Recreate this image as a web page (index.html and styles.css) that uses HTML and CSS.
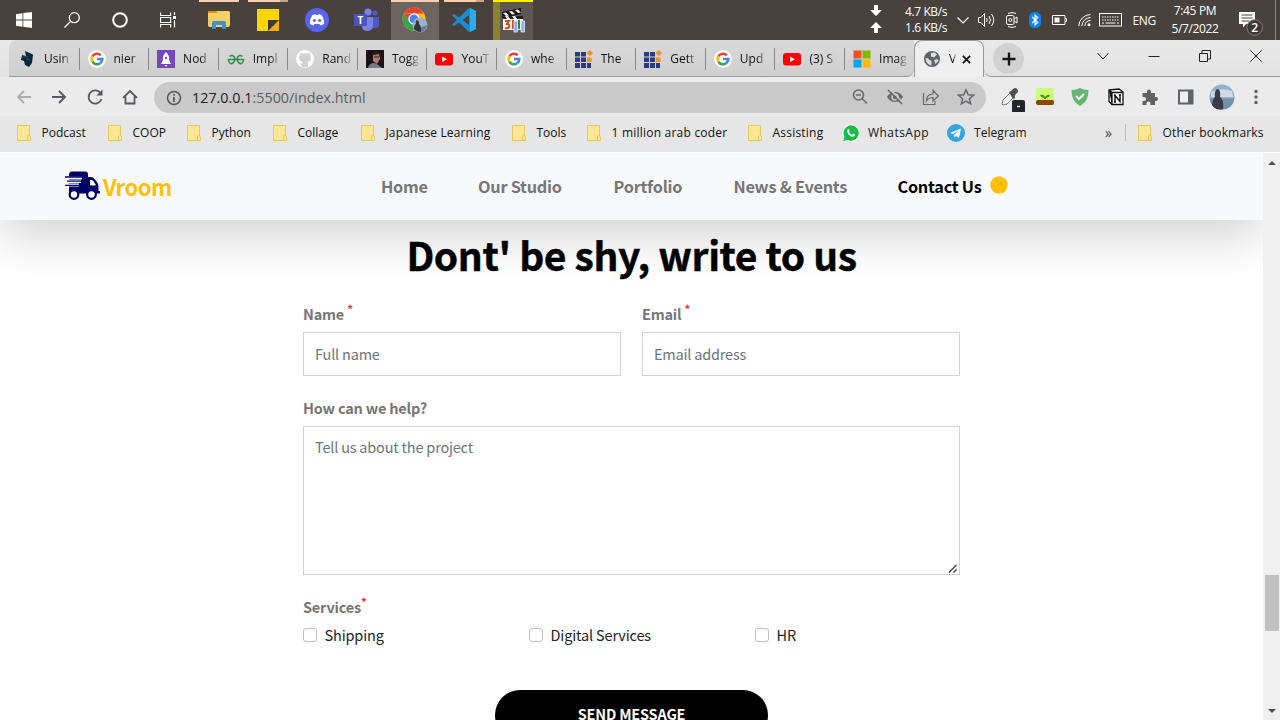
FILE: index.html
```html
<!DOCTYPE html>
<html lang="en">
<head>
<meta charset="utf-8">
<title>Vroom</title>
<link rel="stylesheet" href="styles.css">
</head>
<body>
<svg class="defs" width="0" height="0">
  <symbol id="google" viewBox="0 0 18 18"><circle cx="9" cy="9" r="9" fill="#fff"/><g fill="none" stroke-width="2.6"><path d="M4.5 6.2A5.3 5.3 0 0 1 12.7 5.3" stroke="#ea4335"/><path d="M4.5 11.8A5.3 5.3 0 0 1 4.5 6.2" stroke="#fbbc05"/><path d="M12.4 13A5.3 5.3 0 0 1 4.5 11.8" stroke="#34a853"/><path d="M9 9H14.3A5.3 5.3 0 0 1 12.4 13" stroke="#4285f4"/></g></symbol>
  <symbol id="youtube" viewBox="0 0 18 18"><rect x="0" y="3" width="18" height="12.5" rx="3" fill="#f00"/><path d="M7.2 6.5v5.4l4.6-2.7z" fill="#fff"/></symbol>
  <symbol id="blocks" viewBox="0 0 18 18"><g fill="#2e3a80"><path d="M0 2h5v4.500H0zM6 2h5v4.500H6zM0 7.500h5V12H0zM6 7.500h5V12H6zM0 13h5v5H0zM6 13h5v5H6zM12 13h4v5h-4z"/></g><path d="M12 7.500h4.500V12H12z" fill="#f39325"/><path d="M14.700 0l3.300 3-3 3.300-3.300-3z" fill="#f39325"/></symbol>
  <symbol id="folder" viewBox="0 0 14 16"><path d="M.5.5h12v11l1 1v3H.5z" fill="#ffe694" stroke="#e8c75c"/><path d="M10.500 15.500v-3.500q0-1.500 1.300-1.500t1.700 1.500v3.500z" fill="#ffe694" stroke="#e8c75c"/></symbol>
</svg>

<header class="taskbar">
  <div class="start">
    <span class="slot"><svg width="16" height="16" viewBox="0 0 16 16"><path fill="#fff" d="M0 2.200l6.500-1v6.300H0zM7.300 1.100L16 0v7.500H7.300zM0 8.400h6.500v6.400L0 13.800zM7.300 8.400H16V16l-8.700-1.200z"/></svg></span>
    <span class="slot"><svg width="16" height="16" viewBox="0 0 16 16" fill="none" stroke="#fff" stroke-width="1.300"><circle cx="10.300" cy="5.700" r="5"/><path d="M6.700 9.300L.5 15.500"/></svg></span>
    <span class="slot"><svg width="16" height="16" viewBox="0 0 16 16"><circle cx="8" cy="8" r="6.800" fill="none" stroke="#fff" stroke-width="2"/></svg></span>
    <span class="slot"><svg width="16" height="16" viewBox="0 0 16 16" fill="none" stroke="#fff" stroke-width="1.200"><path d="M.6.5v3h10v-3M.6 15.500v-3h10v3M.6 5.500h10v5H.6zM14.500 0v3M14.500 8v7.500"/><path d="M14.500 4v3" stroke-width="3"/></svg></span>
  </div>
  <div class="apps">
    <span class="app open"><svg width="22" height="20" viewBox="0 0 22 20"><path d="M0 3q0-2 2-2h19q1 0 1 2v12q0 2-2 2H2q-2 0-2-2z" fill="#f8cf62"/><path d="M0 1h8l2 2H0z" fill="#d99500"/><path d="M4 19v-6q0-2 2-2h10q2 0 2 2v6h-4v-4H8v4z" fill="#3b91cf"/></svg></span>
    <span class="app open stacked"><svg width="22" height="22" viewBox="0 0 22 22"><path d="M0 0h22v22H0z" fill="#ffd500"/><path d="M11 22V11h11v11z" fill="#f4ae00"/><path d="M11 22V11h11z" fill="#3c3b3a"/></svg></span>
    <span class="app"><svg width="24" height="24" viewBox="0 0 24 24"><circle cx="12" cy="12" r="12" fill="#5865f2"/><path d="M7.500 7l3-1 .5 1h2l.5-1 3 1q3 4 2.500 9l-3.500 1.500-1-1.500h-5l-1 1.500L5 16q-.5-5 2.500-9z" fill="#fff"/><circle cx="9.300" cy="12.500" r="1.500" fill="#5865f2"/><circle cx="14.700" cy="12.500" r="1.500" fill="#5865f2"/></svg></span>
    <span class="app"><svg width="25" height="24" viewBox="0 0 25 24"><circle cx="14" cy="4" r="3.600" fill="#7b83eb"/><circle cx="21" cy="5" r="2.600" fill="#5059c9"/><path d="M17 9h8v7q0 4-4 4h-4z" fill="#5059c9"/><path d="M8 9h11v8q0 6-6 6-5 0-5-6z" fill="#7b83eb"/><rect y="6" width="13" height="12" rx="1" fill="#4b53bc"/><text x="3.500" y="15.800" class="teams-letter">T</text></svg></span>
    <span class="app open current"><svg width="26" height="26" viewBox="0 0 26 26"><circle cx="12" cy="12" r="11.500" fill="#fbc116"/><path d="M2 6.200A11.500 11.500 0 0 1 22 6.500H12z" fill="#e94235"/><path d="M2 6.200A11.500 11.500 0 0 0 11 23.500l4-7-8-2z" fill="#31a752"/><path d="M2 6.200L7 15l5-8z" fill="#e94235"/><circle cx="12" cy="12" r="5.700" fill="#fff"/><circle cx="12" cy="12" r="4.400" fill="#4285f4"/><circle cx="18" cy="18" r="7.500" fill="#9bb1c8"/><path d="M12 19q5 3 13-1-1 7-7 7.500-5-1-6-6.500z" fill="#667f95"/><path d="M12 22q0-4 2-5-1-3.500 1-4 2.500 1 2 4 2.500 2 2 7.500-4 1-7-2.500z" fill="#35353e"/></svg></span>
    <span class="app open stacked"><svg width="24" height="24" viewBox="0 0 24 24"><path d="M17 0l7 3v18l-7 3L7 14.500 2 18l-2-1.500L5 12 0 7.500 2 6l5 3.500z" fill="#1d8bd1"/><path d="M17 7v10l-6.500-5z" fill="#49413c"/><path d="M18 0l6 3v18l-6 3z" fill="#2eaaf0"/></svg></span>
    <span class="app playing"><svg width="24" height="25" viewBox="0 0 24 25"><path d="M1 4L20 0v6L1 10z" fill="#151515"/><path d="M2 5l3 3 3-.6-3-3zM8 3.500l3 3 3-.6-3-3zM14 2l3 3 3-.6-3-3z" fill="#eee"/><rect x="2" y="9" width="20" height="13" fill="#f5f5f5"/><path d="M2 8h20v3H2z" fill="#222"/><path d="M4 8l2 3h3L7 8zM11 8l2 3h3l-2-3z" fill="#fff"/><path d="M4 13h4l-2 3q3 0 2 3-1 2-4 1" fill="none" stroke="#d34a19" stroke-width="2"/><path d="M12 12v9" stroke="#d34a19" stroke-width="2"/><path d="M18 12v9" stroke="#2a8a3a" stroke-width="2"/><path d="M13 13h3.500v11H13zM20 13h3.500v11H20z" fill="#8fb0ee" stroke="#dfe8ff" stroke-width=".8"/></svg></span>
  </div>
  <div class="tray">
    <span class="arrows"><svg width="12" height="30" viewBox="0 0 12 30" fill="#fff"><path d="M4 0h4v5h4l-6 6-6-6h4zM4 28h4v-5h4l-6-6-6 6h4z"/></svg></span>
    <span class="net"><span>4.7 KB/s</span><span>1.6 KB/s</span></span>
    <svg class="chev" width="12" height="12" viewBox="0 0 12 12" fill="none" stroke="#fff" stroke-width="1.200"><path d="M.5 3.500L6 9l5.500-5.500"/></svg>
    <svg class="sound" width="17" height="14" viewBox="0 0 17 14" fill="none" stroke="#fff"><path d="M.5 4.500H3l3.500-4v13L3 9.500H.5zM8.500 5q1.500 2 0 4M11 3q3 4 0 8M13.500 1q4.500 6 0 12"/></svg>
    <svg class="cam" width="12" height="16" viewBox="0 0 12 16" fill="none" stroke="#fff"><rect x=".5" y="3.500" width="7.500" height="9" rx="1.500"/><path d="M8 7l3-2v6L8 9M2 1.500q4-2 8 0M2 14.500q4 2 8 0"/><circle cx="4.300" cy="8" r="1.500"/></svg>
    <svg class="bt" width="12" height="16" viewBox="0 0 12 16"><rect width="12" height="16" rx="5.500" fill="#0a84f5"/><path d="M3.200 5l5.500 5.500L6 13V3l2.700 2.500L3.200 11" fill="none" stroke="#fff" stroke-width="1.200"/></svg>
    <svg class="bat" width="15" height="10" viewBox="0 0 15 10"><path d="M.5.5h12.500v9H.5zM13 3.500h1.500v3H13" fill="none" stroke="#fff"/><path d="M2.500 2.500h5v5h-5z" fill="#fff"/></svg>
    <svg class="wifi" width="13" height="14" viewBox="0 0 13 14" fill="none" stroke="#fff"><path d="M.8 13A12 12 0 0 1 12.500 1.500M3.800 13A9 9 0 0 1 12.500 4.500M6.800 13A6 6 0 0 1 12.500 7.500"/><circle cx="11" cy="11.700" r="1.500" fill="#fff" stroke="none"/></svg>
    <svg class="kbd" width="23" height="14" viewBox="0 0 23 14" fill="none" stroke="#fff"><rect x=".5" y=".5" width="22" height="12.500"/><path d="M3 4h17M3 7h17" stroke-dasharray="1.500 1"/><path d="M3 10h2M6.500 10h10M18 10h2"/></svg>
    <span class="lang">ENG</span>
    <span class="clock"><span>7:45 PM</span><span>5/7/2022</span></span>
    <span class="notice"><svg width="24" height="24" viewBox="0 0 24 24"><path d="M0 0h16v12H7l-3 3.500V12H0z" fill="#fff"/><path d="M2.500 3h11M2.500 6h11M2.500 9h8" stroke="#49413c"/><circle cx="15.700" cy="15.500" r="7.800" fill="#3c3a38" stroke="#817d79"/><text x="12.300" y="19.500" class="badge">2</text></svg></span>
    <span class="peek"></span>
  </div>
</header>

<section class="browser">
  <div class="tabs">
    <div class="strip">
      <div class="tab first"><svg viewBox="0 0 18 18"><path d="M7 1l7 3 1 1-1 8-3 4-4-2-1-4-3-1 1-5 4 1z" fill="#08283d"/><path d="M4 8l5-2v3l3 1" stroke="#36627e" fill="none" stroke-width=".7"/></svg><span class="label">Usin</span></div>
      <div class="tab"><svg><use href="#google"/></svg><span class="label">nier</span></div>
      <div class="tab"><svg viewBox="0 0 18 18"><path d="M0 0h18v18H0z" fill="#7648bb"/><path d="M9 2q4 4 3 8l2 4H4l2-4q-1-4 3-8zM7.500 15h3l-1.500 2z" fill="#fff"/><circle cx="9" cy="8" r="1.200" fill="#7648bb"/></svg><span class="label">Nod</span></div>
      <div class="tab"><svg viewBox="0 0 18 18" fill="none" stroke="#2f8d46" stroke-width="1.600"><path d="M2.500 6.500Q5 4.500 7 6.500q1.500 2 .5 4.500-1.500 3-4 2.500Q1.500 12.500 1.500 9.500h15q0 3-2 4-2.500.5-4-2.500-1-2.500.5-4.500 2-2 4.500 0"/></svg><span class="label">Impl</span></div>
      <div class="tab"><svg viewBox="0 0 18 18"><circle cx="9" cy="9" r="9" fill="#fff"/><path d="M6.500 17v-3q-2 .5-3-1.500M11.500 17v-3.500q0-1-.7-1.500 4-.5 3.700-4.500 0-1-.8-2 .3-1.200-.2-2.500-1 0-2.500 1-2-.5-4 0-1.500-1-2.500-1-.5 1.300-.2 2.500-.8 1-.8 2Q3.200 11.500 7.200 12q-.7.500-.7 1.500V17z" fill="#d2d2d2" stroke="#d2d2d2" stroke-width=".8"/></svg><span class="label">Rand</span></div>
      <div class="tab"><svg viewBox="0 0 18 18"><path d="M0 0h18v18H0z" fill="#1c1014"/><path d="M2 18q1-5 6-5l3 1 5 4z" fill="#747d83"/><path d="M7 4q3-2 6 0l1 5-3 5-4-3z" fill="#b3776c"/><path d="M6 5q0-4 5-4t4 6l-2-3-5 1z" fill="#26191b"/><path d="M8 7h5" stroke="#3b2326"/></svg><span class="label">Togg</span></div>
      <div class="tab"><svg><use href="#youtube"/></svg><span class="label">YouT</span></div>
      <div class="tab"><svg><use href="#google"/></svg><span class="label">whe</span></div>
      <div class="tab"><svg><use href="#blocks"/></svg><span class="label">The</span></div>
      <div class="tab"><svg><use href="#blocks"/></svg><span class="label">Gett</span></div>
      <div class="tab"><svg><use href="#google"/></svg><span class="label">Upd</span></div>
      <div class="tab"><svg><use href="#youtube"/></svg><span class="label">(3) S</span></div>
      <div class="tab last"><svg viewBox="0 0 18 18"><path d="M.5.500h8v8h-8z" fill="#f25022"/><path d="M9.500.5h8v8h-8z" fill="#7fba00"/><path d="M.5 9.500h8v8h-8z" fill="#00a4ef"/><path d="M9.500 9.500h8v8h-8z" fill="#ffb900"/></svg><span class="label">Imag</span></div>
    </div>
    <div class="tab active"><svg viewBox="0 0 18 18"><circle cx="9" cy="9" r="8" fill="#5f6368"/><path d="M2.500 8q3-.5 4 2l2 1v4.500Q3 15 2.500 8zM8 3q4-1.500 6 1.500l-3 3-3-1zM11 10l3.500-1 1 2-3 3z" fill="#dcdcdc"/></svg><span class="label">V</span><svg class="close" viewBox="0 0 10 10" stroke="#111" stroke-width="2"><path d="M1 1l8 8M9 1L1 9"/></svg></div>
    <div class="after">
      <span class="plus"><svg width="14" height="14" viewBox="0 0 14 14" stroke="#151515" stroke-width="2.400"><path d="M7 .5v13M.5 7h13"/></svg></span>
      <span class="window"><svg width="12" height="12" viewBox="0 0 12 12"><path d="M.5 3L6 9l5.500-6"/></svg><svg width="12" height="12" viewBox="0 0 12 12"><path d="M.5 6.500h11"/></svg><svg width="12" height="12" viewBox="0 0 12 12"><path d="M.5 3.500h8v8h-8zM3 3.500V.5h8.500V9h-3"/></svg><svg width="12" height="12" viewBox="0 0 12 12"><path d="M.5.500l11 11M11.500.5l-11 11"/></svg></span>
    </div>
  </div>

  <div class="toolbar">
    <div class="nav-icons">
      <svg class="dim" viewBox="0 0 18 18"><path d="M16 9H3M9 3L3 9l6 6"/></svg>
      <svg viewBox="0 0 18 18"><path d="M2 9h13M9 3l6 6-6 6"/></svg>
      <svg viewBox="0 0 18 18"><path d="M14.500 5A6.600 6.600 0 1 0 15.500 11"/><path d="M16.500 1.500v6h-6z" fill="#55585c" stroke="none"/></svg>
      <svg viewBox="0 0 18 18"><path d="M2 9.800L9 3l7 6.800M4.500 8.500v7h9v-7"/></svg>
    </div>
    <div class="omnibox">
      <svg class="info" viewBox="0 0 16 16"><circle cx="8" cy="8" r="6.500" fill="none" stroke="#55585c" stroke-width="1.500"/><path d="M8 7v5M8 4v1.700" stroke="#55585c" stroke-width="1.700"/></svg>
      <span class="url"><b>127.0.0.1</b>:5500/index.html</span>
      <span class="actions">
        <svg viewBox="0 0 18 18"><circle cx="7.500" cy="7" r="5"/><path d="M11 10.500l5 5M5 7h5"/></svg>
        <svg viewBox="0 0 18 18"><path d="M1 9q3-5 8-5t8 5q-3 5-8 5T1 9z" fill="#66686b" stroke="none"/><circle cx="9" cy="9" r="3" stroke="#c9c9c9"/><path d="M3.500 1l14 14" stroke="#c9c9c9"/><path d="M2 2l14 14"/></svg>
        <svg viewBox="0 0 18 18"><path d="M1.500 5v11.500H13V13M4.500 13q0-7 6.500-7V2.500L16.500 8 11 13V9.500q-4 0-6.500 3.500z" stroke-width="1.200"/></svg>
        <svg viewBox="0 0 18 18"><path d="M9 1.800l2.200 5 5.300.4-4.100 3.500 1.300 5.300L9 13.200 4.300 16l1.300-5.300-4.100-3.500 5.300-.4z" stroke-width="1.500"/></svg>
      </span>
    </div>
    <div class="extensions">
      <svg width="26" height="26" viewBox="0 0 26 26"><path d="M2 18l1-4 7-7 4 4-7 7-4 1z" fill="#f0f0f0" stroke="#777"/><path d="M9 6l2-1 2-2q2-2 4 0t0 4l-2 2v3l-2 1z" fill="#505050"/><rect x="12" y="14" width="13" height="13" rx="2" fill="#1f2529"/><path d="M17 20.500h3" stroke="#e8dede" stroke-width="1.500"/></svg>
      <svg class="e2" width="20" height="20" viewBox="0 0 20 20"><rect x="1" y="1" width="18" height="13" rx="2" fill="#ccff76"/><rect x="1" y="13" width="18" height="5" rx="2" fill="#8d4700"/><path d="M5 8q4-1 5 2 2-3 5-2-1 3-5 3T5 8zM9 10h2v2H9z" fill="#439500"/></svg>
      <svg class="e3" width="18" height="18" viewBox="0 0 18 18"><path d="M9 0q3 2 8.500 2Q18 13 9 18 0 13 .5 2 6 2 9 0z" fill="#66b574"/><path d="M5 8l3 3 5-5" stroke="#fff" stroke-width="2" fill="none"/></svg>
      <svg class="e4" width="18" height="18" viewBox="0 0 18 18"><path d="M2 2l10-1 4 3v12.500H5l-3-3z" fill="#fff" stroke="#111" stroke-width="1.300"/><path d="M2 2l3 2.500v12M5 4.500h11" stroke="#111" stroke-width="1.300"/><path d="M8 14V7.500l5 6V7M7 7.500h2M12 7h2M7 14h2" stroke="#111" stroke-width="1.400" fill="none"/></svg>
      <svg class="e5" width="18" height="18" viewBox="0 0 18 18"><path d="M1.500 5H6V3.500a2 2 0 0 1 4 0V5h4v4h1a2 2 0 0 1 0 4h-1v4H9.500v-1.500a2 2 0 0 0-4 0V17h-4v-4H3a2 2 0 0 0 0-4H1.500z" fill="#5f6368"/></svg>
      <svg class="e6" width="16" height="16" viewBox="0 0 16 16"><path d="M1 1.500h13.500v13H1z" fill="#eee" stroke="#5f6368" stroke-width="2"/><path d="M10 1h5v14h-5z" fill="#5f6368"/></svg>
      <svg class="e7" width="26" height="26" viewBox="0 0 26 26"><circle cx="13" cy="13" r="12.500" fill="#8fb2d0"/><path d="M2 8q10-5 21-1l1 6H2z" fill="#d2dbe3"/><path d="M.6 14.500h24.800Q24 25 13 25.500 2 25 .6 14.500z" fill="#7390a6"/><path d="M3 21q1-7 3-8-1-6 2-8 4 0 3 8 4 2 3 12-7 2-11-4z" fill="#3b3b48"/></svg>
      <svg class="e8" width="6" height="18" viewBox="0 0 6 18" fill="#5f6368"><circle cx="3" cy="3.500" r="1.700"/><circle cx="3" cy="9" r="1.700"/><circle cx="3" cy="14.500" r="1.700"/></svg>
    </div>
  </div>

  <div class="bookmarks">
    <span class="mark m1"><svg><use href="#folder"/></svg>Podcast</span>
    <span class="mark m2"><svg><use href="#folder"/></svg>COOP</span>
    <span class="mark m3"><svg><use href="#folder"/></svg>Python</span>
    <span class="mark m4"><svg><use href="#folder"/></svg>Collage</span>
    <span class="mark m5"><svg><use href="#folder"/></svg>Japanese Learning</span>
    <span class="mark m6"><svg><use href="#folder"/></svg>Tools</span>
    <span class="mark m7"><svg><use href="#folder"/></svg>1 million arab coder</span>
    <span class="mark m8"><svg><use href="#folder"/></svg>Assisting</span>
    <span class="mark m9"><svg class="brand" viewBox="0 0 18 18"><circle cx="9" cy="9" r="9" fill="#fff"/><path d="M9 1.300a7.700 7.700 0 1 1-3.500 14.500L1.300 17l1.200-4.200A7.700 7.700 0 0 1 9 1.300z" fill="#12bd48"/><path d="M5.500 5.500q1-1 1.500 0l.7 1.500-.7 1.200q1 2 3 2.600l1-1.200 2 1q0 2-2 2.200Q7 12.500 5.200 8q-.2-1.500.3-2.500z" fill="#fff"/></svg>WhatsApp</span>
    <span class="mark m10"><svg class="brand" viewBox="0 0 18 18"><circle cx="9" cy="9" r="9" fill="#35a5df"/><path d="M3 9l11-4.500-2 9.500-3-2-1.500 1.500L7 11l5-4.500L6 10z" fill="#fff"/></svg>Telegram</span>
    <span class="more">»</span>
    <span class="mark other"><svg><use href="#folder"/></svg>Other bookmarks</span>
  </div>
</section>

<main class="viewport">
  <div class="page">
    <nav class="navbar">
      <a class="brand-name"><svg width="36" height="29" viewBox="0 0 36 29"><path d="M4 4q0-3.500 3-3.500h13q3 0 3 3V6h3q2 0 3.500 2l3 4q1 1.500 1 4v4h1.500v2.500H4z" fill="#000066"/><path d="M25 9h1.500q1 0 2 1.300L31 14q-3 1-6 0z" fill="#f8f9fc"/><path d="M0 7h17M2 10.500h14M0 14h14" stroke="#f8f9fc" stroke-width="3"/><path d="M0 6h17M2 10.200h14M0 14.300h14" stroke="#000066" stroke-width="1.300"/><circle cx="9" cy="23.500" r="4.300" fill="#fff" stroke="#000066" stroke-width="2.200"/><circle cx="26.500" cy="23.500" r="4.300" fill="#fff" stroke="#000066" stroke-width="2.200"/></svg><span>Vroom</span></a>
      <div class="links"><a class="l1">Home</a><a class="l2">Our Studio</a><a class="l3">Portfolio</a><a class="l4">News &amp; Events</a><a class="l5 current-link">Contact Us</a><svg class="dot" viewBox="0 0 18 18"><circle cx="9" cy="9" r="8.700" fill="#ffc107"/><path d="M6 11.500L11.500 6M7.500 6h4v4" fill="none" stroke="#eca51c" stroke-width=".7"/></svg></div>
    </nav>
    <form class="contact">
      <h1>Dont' be shy, write to us</h1>
      <div class="pair">
        <label class="field"><span class="caption">Name <sup>*</sup></span><input type="text" placeholder="Full name"></label>
        <label class="field"><span class="caption">Email <sup>*</sup></span><input type="text" placeholder="Email address"></label>
      </div>
      <label class="field message"><span class="caption">How can we help?</span><textarea placeholder="Tell us about the project"></textarea><svg class="grip" width="10" height="10" viewBox="0 0 10 10" stroke="#444" stroke-width="1.500"><path d="M1 8.500L8.500 1M5.500 8.500l3-3" stroke-dasharray="none"/></svg></label>
      <div class="services"><span class="caption">Services<sup>*</sup></span>
        <div class="checks"><label><i></i>Shipping</label><label><i></i>Digital Services</label><label><i></i>HR</label></div>
      </div>
      <button type="button">SEND MESSAGE</button>
    </form>
  </div>
  <aside class="scrollbar"><svg width="8" height="4" viewBox="0 0 8 4"><path d="M0 4l4-4 4 4z" fill="#505050"/></svg><span class="thumb"></span><svg width="8" height="4" viewBox="0 0 8 4"><path d="M0 0l4 4 4-4z" fill="#505050"/></svg></aside>
</main>
</body>
</html>
```
FILE: styles.css
```css
* { box-sizing: border-box; }
body { margin: 0; width: 1280px; height: 720px; overflow: hidden; background: #fff; font-family: "Open Sans", sans-serif; font-size: 12px; }
svg { display: block; flex: none; }
.defs { display: none; }

.taskbar { height: 40px; background: #49413c; display: flex; color: #fff; }
.start { display: flex; width: 194.5px; }
.slot { width: 48px; display: grid; place-items: center; }
.apps { display: flex; width: 343px; }
.app { width: 49px; height: 40px; display: grid; place-items: center; }
.open { background: linear-gradient(#fccfb1, #fccfb1) 4.5px 0 / 40px 2px no-repeat; }
.stacked { background: linear-gradient(90deg, #fccfb1 32px, #c9a58e 32px) 4.5px 0 / 40px 2px no-repeat; }
.current { background: linear-gradient(#fccfb1 2px, #6b645f 2px) 0 0 / 48px 40px no-repeat; }
.playing { background: linear-gradient(#fff000, #fff000) 4.5px 0 / 40px 2px no-repeat, linear-gradient(90deg, #8a8031 7px, #5e5650 7px) 4.5px 0 / 40px 40px no-repeat; }
.teams-letter { font: bold 10px "Open Sans", sans-serif; fill: #fff; }
.tray { margin-left: 332.500px; flex: 1; display: flex; align-items: center; }
.net { display: flex; flex-direction: column; line-height: 16px; width: 45px; margin-left: 23px; letter-spacing: -.4px; white-space: nowrap; }
.chev { margin-left: 6.500px; }
.sound { margin-left: 9px; }
.cam { margin-left: 11px; }
.bt { margin-left: 11px; }
.bat { margin-left: 11px; }
.wifi { margin-left: 11px; }
.kbd { margin-left: 8px; }
.lang { margin-left: 11px; width: 24px; letter-spacing: -.4px; }
.clock { margin-left: 14px; width: 49px; display: flex; flex-direction: column; align-items: center; line-height: 18px; letter-spacing: -.35px; white-space: nowrap; padding-bottom: 1px; }
.notice { margin-left: 19px; margin-top: 7px; }
.badge { font: 600 12px "Open Sans", sans-serif; fill: #fff; }
.peek { width: 1px; height: 40px; background: #8b8580; margin-left: auto; margin-right: 4px; }

.browser { height: 112px; background: #e7e7e7; color: #111; }
.tabs { height: 37px; display: flex; background: linear-gradient(#e9e9e9, #e3e3e3); }
.strip { margin-left: 9px; width: 905px; display: flex; border-bottom: 1px solid #999; background: linear-gradient(#d9d9d9, #cfcfcf); border-radius: 8px 0 8px 0; }
.tab { width: 69.600px; flex: none; height: 37px; padding-left: 8px; display: flex; align-items: center; background: linear-gradient(#888, #888) right 8px / 1px 22px no-repeat; }
.tab.first { width: 70.500px; padding-left: 9px; }
.tab.last { background: none; width: 68px; }
.tab svg { width: 18px; height: 18px; }
.label { margin-left: 8px; min-width: 27px; white-space: nowrap; letter-spacing: 0; padding-bottom: 1px; -webkit-mask-image: linear-gradient(90deg, #000 65%, rgba(0, 0, 0, .15)); mask-image: linear-gradient(90deg, #000 65%, rgba(0, 0, 0, .15)); }
.tab.active { width: 70px; background: #efefef; border: 1px solid #999; border-bottom: 0; border-radius: 8px 8px 0 0; padding-left: 8px; }
.active .label { min-width: 0; width: 7px; }
.tab .close { width: 9px; height: 9px; margin-left: 6px; }
.after { flex: 1; display: flex; border-bottom: 1px solid #999; border-bottom-left-radius: 8px; justify-content: space-between; }
.plus { margin: 3px 0 0 9px; width: 31px; height: 31px; border-radius: 50%; background: #d1d1d1; display: grid; place-items: center; }
.window { display: flex; gap: 39px; padding: 9.500px 18.500px 0 0; fill: none; stroke: #222; }

.toolbar { height: 39px; display: flex; align-items: center; background: #ebebeb; padding-top: 2px; }
.nav-icons { display: flex; gap: 17.300px; padding-left: 15px; width: 154px; padding-bottom: 1px; }
.nav-icons svg { width: 18px; height: 18px; fill: none; stroke: #55585c; stroke-width: 1.800; }
.nav-icons .dim { stroke: #adadad; }
.omnibox { width: 832px; height: 31px; border-radius: 16px; background: #c9c9c9; display: flex; align-items: center; }
.info { width: 16px; height: 16px; margin-left: 12px; }
.url { margin-left: 10px; font-size: 14.300px; color: #5c5c5c; letter-spacing: .02px; padding-bottom: 1px; }
.url b { font-weight: 400; color: #222; }
.actions { margin-left: auto; display: flex; gap: 17.300px; padding: 0 11px 1px 0; }
.actions svg { width: 18px; height: 18px; fill: none; stroke: #66686b; stroke-width: 1.600; }
.extensions { display: flex; align-items: center; padding: 0 0 1px 14px; }
.extensions svg:first-child { margin-top: 4px; }
.e2 { margin-left: 9px; } .e3 { margin-left: 16px; } .e4 { margin-left: 18px; } .e5 { margin-left: 16px; }
.e6 { margin-left: 19px; } .e7 { margin-left: 15px; } .e8 { margin-left: 18px; }
.bookmarks { height: 36px; display: flex; align-items: center; padding: 0 0 3px 17px; white-space: nowrap; background: #e6e6e6; }
.mark { display: flex; align-items: center; gap: 10.500px; flex: none; letter-spacing: 0; }
.mark svg { width: 14px; height: 16px; }
.mark .brand { width: 18px; height: 18px; }
.m1 { width: 91px; } .m2 { width: 79px; } .m3 { width: 86px; } .m4 { width: 88px; } .m5 { width: 151px; letter-spacing: .15px; }
.m6 { width: 75px; } .m7 { width: 161px; letter-spacing: .22px; } .m8 { width: 94px; letter-spacing: .22px; } .m9 { width: 105px; gap: 8px; letter-spacing: .45px; } .m10 { width: 158px; gap: 9px; letter-spacing: .05px; }
.more { width: 20px; font-size: 14px; color: #444; }
.other { border-left: 1px solid #bbb; padding-left: 12px; letter-spacing: .18px; }

.viewport { margin-top: 1px; height: 567px; display: flex; background: #fff; }
.page { width: 1263px; overflow: hidden; font-family: "Noto Sans CJK JP", sans-serif; color: #212529; }
.navbar { height: 67px; background: #f8f9fc; display: flex; align-items: center; padding: 0 0 2px 65px; box-shadow: 0 16px 48px rgba(0, 0, 0, .175); }
.brand-name { display: flex; align-items: center; gap: 2px; width: 316px; color: #ffc107; font-size: 22px; font-weight: 700; letter-spacing: -.5px; }
.links { display: flex; align-items: center; font-size: 16.300px; font-weight: 700; color: #767676; white-space: nowrap; letter-spacing: -.25px; }
.l1 { width: 97px; } .l2 { width: 135.500px; } .l3 { width: 120px; } .l4 { width: 164px; } .l5 { width: 92px; }
.current-link { color: #000; }
.dot { width: 18px; height: 18px; margin-bottom: 1px; }
.contact { width: 657px; margin: 0 auto; display: flex; flex-direction: column; }
h1 { margin: 9px 0 0; height: 50px; line-height: 50px; font-size: 39px; font-weight: 700; text-align: center; color: #000; white-space: nowrap; letter-spacing: -.41px; -webkit-text-stroke: .4px #000; }
.pair { display: grid; grid-template-columns: 318px 318px; justify-content: space-between; margin-top: 24px; }
.field { display: flex; flex-direction: column; position: relative; }
.caption { display: block; height: 22px; line-height: 22px; font-size: 14.500px; font-weight: 700; color: #767676; letter-spacing: -.2px; }
sup { color: #dc3545; font-size: 11.500px; line-height: 0; }
input, textarea { border: 1px solid #ced4da; border-radius: 0; padding: 0 11px 2px; font: 14.500px "Noto Sans CJK JP", sans-serif; letter-spacing: -.2px; outline: none; margin: 7px 0 0; }
input { height: 44px; }
textarea { height: 149px; padding-top: 9px; resize: none; }
.grip { position: absolute; right: 2px; bottom: 1px; }
::placeholder { color: #6c757d; opacity: 1; }
.message { margin-top: 21px; }
.services { margin-top: 21px; }
.checks { display: grid; grid-template-columns: 226px 226px 205px; height: 22px; margin-top: 6px; font-size: 14.500px; letter-spacing: -.15px; }
.checks label { display: flex; align-items: center; line-height: 22px; }
.checks i { width: 14px; height: 14px; border: 1px solid #bfbfbf; border-radius: 3px; margin: 0 7.500px 0 0; }
button { align-self: center; width: 273px; height: 50px; margin-top: 44px; padding: 0 0 3px; border: 0; border-radius: 25px; background: #000; color: #fff; font: 700 14.500px "Noto Sans CJK JP", sans-serif; letter-spacing: -.2px; }
.scrollbar { width: 17px; background: #f0f0f0; display: flex; flex-direction: column; align-items: center; justify-content: space-between; padding: 8px 0 7px; }
.thumb { width: 14px; height: 56px; margin-top: 332px; background: #c1c1c1; }
```
